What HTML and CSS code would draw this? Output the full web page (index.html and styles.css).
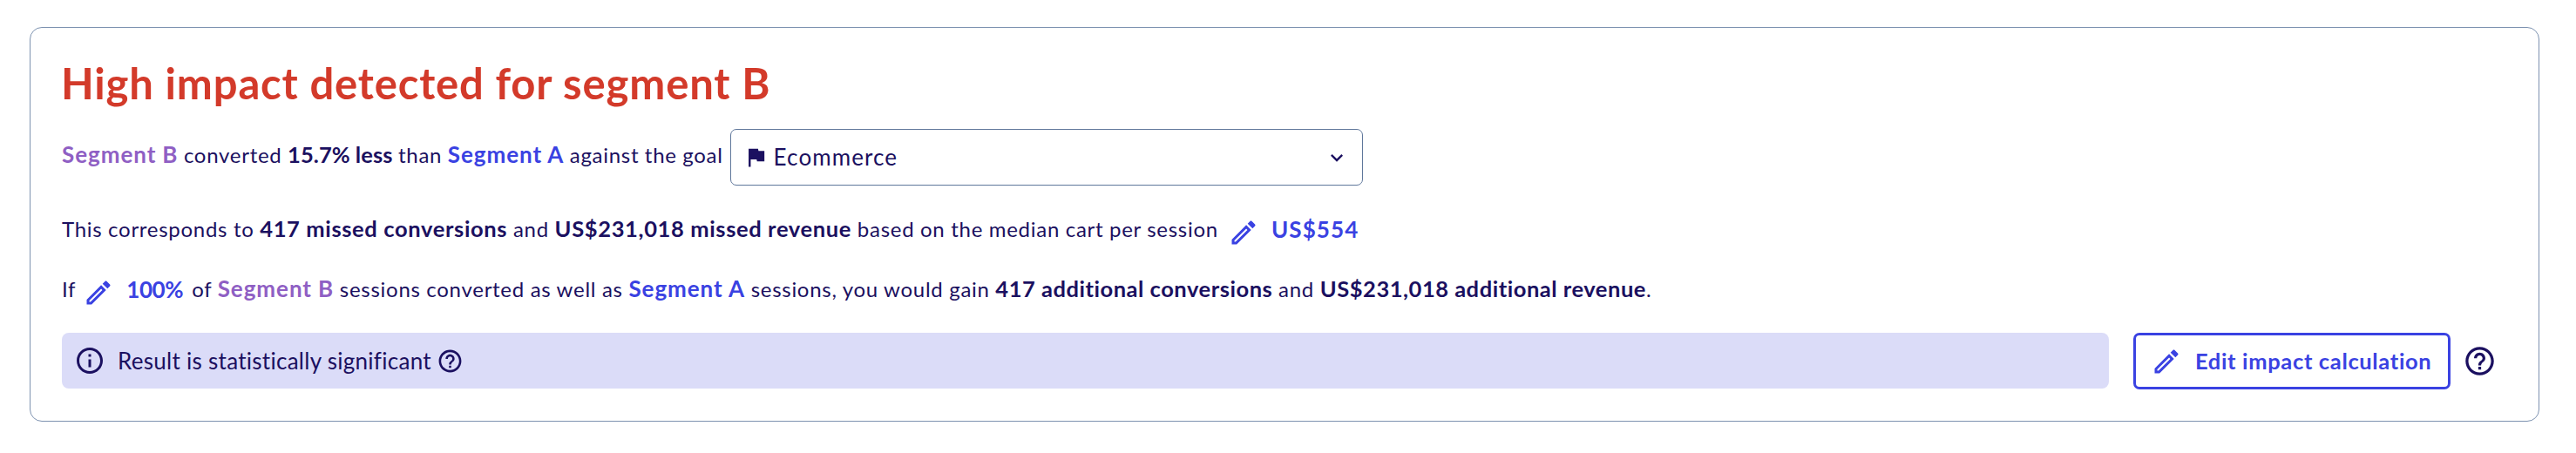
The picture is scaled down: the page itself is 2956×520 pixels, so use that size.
FILE: index.html
```
<!DOCTYPE html>
<html lang="en">

<head>
  <meta charset="UTF-8">
  <meta name="viewport" content="width=device-width, initial-scale=1.0">
  <title>Impact</title>
  <link rel="stylesheet" href="styles.css">
</head>

<body>
  <div class="card">
    <h2 class="title">High impact detected for segment B</h2>
    <div class="row goal-row">
      <p><b class="seg seg-b">Segment B</b> converted <b class="pct">15.7% less</b> than <b class="seg seg-a">Segment A</b> against the goal</p>
      <div class="select">
        <svg class="flag" viewBox="0 0 24 24"><path d="M14.4 6L14 4H5v17h2v-7h5.6l.4 2h7V6z"/></svg>
        <span class="select-text">Ecommerce</span>
        <svg class="arrow" viewBox="0 0 24 24"><path d="M7.41 8.59L12 13.17l4.59-4.58L18 10l-6 6-6-6z"/></svg>
      </div>
    </div>
    <div class="row">
      <p>This corresponds to <b>417 missed conversions</b> and <b>US$231,018 missed revenue</b> based on the median cart per session</p>
      <a class="edit">
        <svg class="pencil" viewBox="0 0 24 24"><path d="M14.06 9.02l.92.92L5.92 19H5v-.92l9.06-9.06M17.66 3c-.25 0-.51.1-.7.29l-1.83 1.83 3.75 3.75 1.83-1.83c.39-.39.39-1.02 0-1.41l-2.34-2.34c-.2-.2-.45-.29-.71-.29zm-3.6 3.19L3 17.25V21h3.75L17.81 9.94l-3.75-3.75z"/></svg>
        <span class="money">US$554</span>
      </a>
    </div>
    <div class="row">
      <p>If</p>
      <a class="edit edit-share">
        <svg class="pencil" viewBox="0 0 24 24"><path d="M14.06 9.02l.92.92L5.92 19H5v-.92l9.06-9.06M17.66 3c-.25 0-.51.1-.7.29l-1.83 1.83 3.75 3.75 1.83-1.83c.39-.39.39-1.02 0-1.41l-2.34-2.34c-.2-.2-.45-.29-.71-.29zm-3.6 3.19L3 17.25V21h3.75L17.81 9.94l-3.75-3.75z"/></svg>
        <span class="share">100%</span>
      </a>
      <p class="after">of <b class="seg seg-b">Segment B</b> sessions converted as well as <b class="seg seg-a">Segment A</b> sessions, you would gain <b class="gain">417 additional conversions</b> and <b class="gain">US$231,018 additional revenue</b>.</p>
    </div>
    <div class="footer">
      <div class="notice">
        <svg class="info" viewBox="0 0 24 24"><path d="M11 7h2v2h-2zm0 4h2v6h-2zm1-9C6.48 2 2 6.48 2 12s4.48 10 10 10 10-4.48 10-10S17.52 2 12 2zm0 18c-4.41 0-8-3.59-8-8s3.59-8 8-8 8 3.59 8 8-3.59 8-8 8z"/></svg>
        <span class="notice-text">Result is statistically significant</span>
        <svg class="help-small" viewBox="0 0 24 24"><path d="M11 18h2v-2h-2v2zm1-16C6.48 2 2 6.48 2 12s4.48 10 10 10 10-4.48 10-10S17.52 2 12 2zm0 18c-4.41 0-8-3.59-8-8s3.59-8 8-8 8 3.59 8 8-3.59 8-8 8zm0-14c-2.21 0-4 1.79-4 4h2c0-1.1.9-2 2-2s2 .9 2 2c0 2-3 1.75-3 5h2c0-2.25 3-2.5 3-5 0-2.21-1.79-4-4-4z"/></svg>
      </div>
      <a class="btn">
        <svg class="pencil" viewBox="0 0 24 24"><path d="M14.06 9.02l.92.92L5.92 19H5v-.92l9.06-9.06M17.66 3c-.25 0-.51.1-.7.29l-1.83 1.83 3.75 3.75 1.83-1.83c.39-.39.39-1.02 0-1.41l-2.34-2.34c-.2-.2-.45-.29-.71-.29zm-3.6 3.19L3 17.25V21h3.75L17.81 9.94l-3.75-3.75z"/></svg>
        <span class="btn-text">Edit impact calculation</span>
      </a>
      <svg class="help" viewBox="0 0 24 24"><path d="M11 18h2v-2h-2v2zm1-16C6.48 2 2 6.48 2 12s4.48 10 10 10 10-4.48 10-10S17.52 2 12 2zm0 18c-4.41 0-8-3.59-8-8s3.59-8 8-8 8 3.59 8 8-3.59 8-8 8zm0-14c-2.21 0-4 1.79-4 4h2c0-1.1.9-2 2-2s2 .9 2 2c0 2-3 1.75-3 5h2c0-2.25 3-2.5 3-5 0-2.21-1.79-4-4-4z"/></svg>
    </div>
  </div>
</body>

</html>
```
FILE: styles.css
```
* {
  margin: 0;
  padding: 0;
  box-sizing: border-box;
}

body {
  background-color: #fff;
  font-family: Lato, "Proxima Nova", sans-serif;
  font-size: 24px;
  color: #1b1060;
}

.card {
  width: 2880px;
  height: 453px;
  margin: 31px 0 0 34px;
  padding: 34px 36px 0;
  border: 1px solid #7d92b0;
  border-radius: 14px;
}

.title {
  margin-left: -1px;
  font-size: 49px;
  line-height: 58px;
  letter-spacing: 0.85px;
  color: #d33a2a;
}

.row {
  display: flex;
  align-items: center;
  height: 69px;
  line-height: 69px;
  letter-spacing: 0.72px;
  word-spacing: -0.15px;
  white-space: nowrap;
}

.goal-row {
  height: 65px;
  line-height: 59px;
  margin: 24px 0 15px;
  align-items: flex-start;
  word-spacing: -0.3px;
}

b {
  font-size: 25.5px;
  letter-spacing: 0.65px;
}

.seg {
  font-size: 26px;
  letter-spacing: 0.95px;
}

.seg-a {
  color: #3a42e2;
}

.seg-b {
  color: #8f5fc4;
}

.pct {
  letter-spacing: 0.08px;
}

.gain {
  letter-spacing: 0.54px;
}

svg {
  fill: currentColor;
  flex: none;
}

.select {
  display: flex;
  align-items: center;
  width: 726px;
  height: 65px;
  margin-left: 8px;
  padding: 0 15px 0 14px;
  border: 1px solid #5f779b;
  border-radius: 7px;
}

.flag {
  width: 29px;
  height: 29px;
}

.select-text {
  flex: 1;
  margin-left: 6px;
  font-size: 26px;
  letter-spacing: 1.1px;
}

.arrow {
  width: 28px;
  height: 28px;
}

.edit {
  display: flex;
  align-items: center;
  margin-left: 11px;
  font-size: 26px;
  font-weight: bold;
  color: #3a42e2;
}

.edit-share {
  margin-left: 8px;
}

.pencil {
  width: 36px;
  height: 36px;
}

.edit .pencil {
  margin-top: 9px;
}

.edit span {
  margin: 2px 0 0 14px;
}

.money {
  letter-spacing: 1.1px;
}

.share {
  letter-spacing: -0.4px;
}

.after {
  margin-left: 10px;
}

.footer {
  display: flex;
  height: 65px;
  margin-top: 16px;
}

.notice {
  display: flex;
  align-items: center;
  width: 2349px;
  height: 64px;
  padding-left: 14px;
  border-radius: 8px;
  background-color: #dbdcf8;
  font-size: 26px;
  letter-spacing: 0.28px;
}

.info {
  width: 36px;
  height: 36px;
}

.notice-text {
  margin: 0 6px 0 14px;
}

.help-small {
  width: 31px;
  height: 31px;
}

.btn {
  display: flex;
  align-items: center;
  width: 364px;
  height: 65px;
  margin-left: 28px;
  padding-left: 17px;
  border: 3px solid #3a42e2;
  border-radius: 7px;
  font-size: 25.5px;
  font-weight: bold;
  letter-spacing: 0.65px;
  color: #3a42e2;
}

.btn-text {
  margin: -2px 0 0 15px;
}

.help {
  align-self: center;
  width: 39px;
  height: 39px;
  margin-left: 14px;
}
```
